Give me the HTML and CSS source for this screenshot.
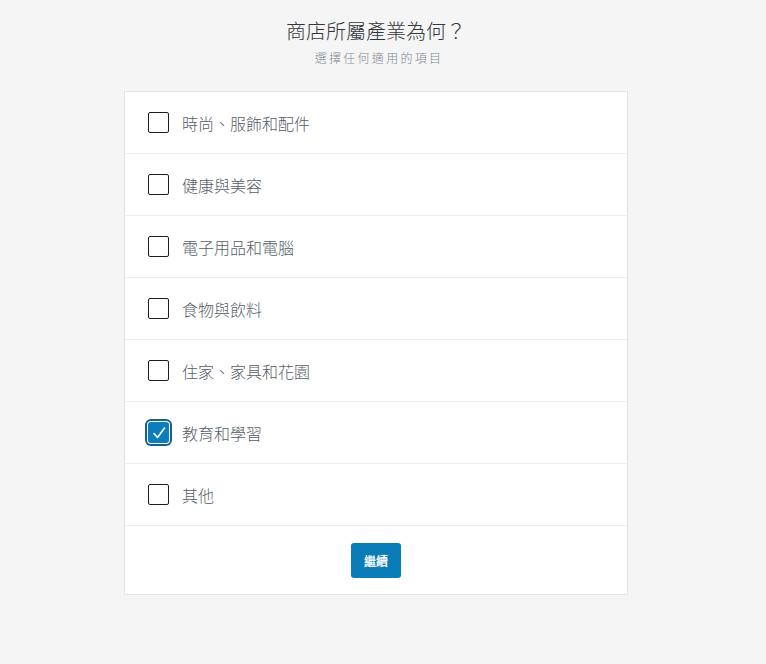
FILE: index.html
```html
<!DOCTYPE html>
<html lang="zh-Hant">
<head>
<meta charset="utf-8">
<link rel="stylesheet" href="styles.css">
</head>
<body>
<div class="page">
  <h1 class="title">商店所屬產業為何？</h1>
  <p class="subtitle">選擇任何適用的項目</p>
  <div class="card">
    <label class="row"><span class="box"></span><span class="label">時尚、服飾和配件</span></label>
    <label class="row"><span class="box"></span><span class="label">健康與美容</span></label>
    <label class="row"><span class="box"></span><span class="label">電子用品和電腦</span></label>
    <label class="row"><span class="box"></span><span class="label">食物與飲料</span></label>
    <label class="row"><span class="box"></span><span class="label">住家、家具和花園</span></label>
    <label class="row"><span class="box checked"><svg viewBox="0 0 20 20" width="20" height="20"><path d="M5 10.5 L8.5 14.5 L15.5 5" fill="none" stroke="#fff" stroke-width="1.6" stroke-linecap="round" stroke-linejoin="round"/></svg></span><span class="label">教育和學習</span></label>
    <label class="row"><span class="box"></span><span class="label">其他</span></label>
    <div class="actions"><button class="btn">繼續</button></div>
  </div>
</div>
</body>
</html>
```
FILE: styles.css
```css
html, body {
  margin: 0;
  padding: 0;
  background: #f5f5f5;
  font-family: "Noto Sans CJK TC", "Noto Sans", sans-serif;
}
body {
  padding-right: 14px;
}
.page {
  width: 504px;
  margin: 0 auto;
  padding-top: 15px;
}
.title {
  margin: 0;
  text-align: center;
  font-size: 20px;
  font-weight: 300;
  line-height: 32px;
  color: #32373c;
}
.subtitle {
  margin: 2px 0 0 6px;
  text-align: center;
  font-size: 12px;
  font-weight: 300;
  letter-spacing: 2.3px;
  line-height: 18px;
  color: #7e8993;
}
.card {
  margin-top: 24px;
  background: #fff;
  border: 1px solid #e2e4e7;
  box-sizing: border-box;
}
.row {
  display: flex;
  align-items: center;
  height: 62px;
  padding: 0 23px;
  border-bottom: 1px solid #eeeeee;
  box-sizing: border-box;
}
.box {
  width: 21px;
  height: 21px;
  box-sizing: border-box;
  border: 1.5px solid #1e1e1e;
  border-radius: 2px;
  flex: none;
  display: flex;
  align-items: center;
  justify-content: center;
}
.box.checked {
  background: #0a7dbb;
  border: none;
  box-shadow: 0 0 0 1px #fff, 0 0 0 3px #16608f;
  border-radius: 3px;
}
.label {
  margin-left: 13px;
  font-size: 16px;
  font-weight: 300;
  color: #555d66;
}
.actions {
  height: 68px;
  display: flex;
  align-items: center;
  justify-content: center;
}
.btn {
  width: 50px;
  height: 35px;
  border: none;
  border-radius: 3px;
  background: #0a7cb8;
  color: #fff;
  font-family: "Noto Sans CJK TC", sans-serif;
  font-size: 12px;
  font-weight: 700;
  padding: 0;
}
```
